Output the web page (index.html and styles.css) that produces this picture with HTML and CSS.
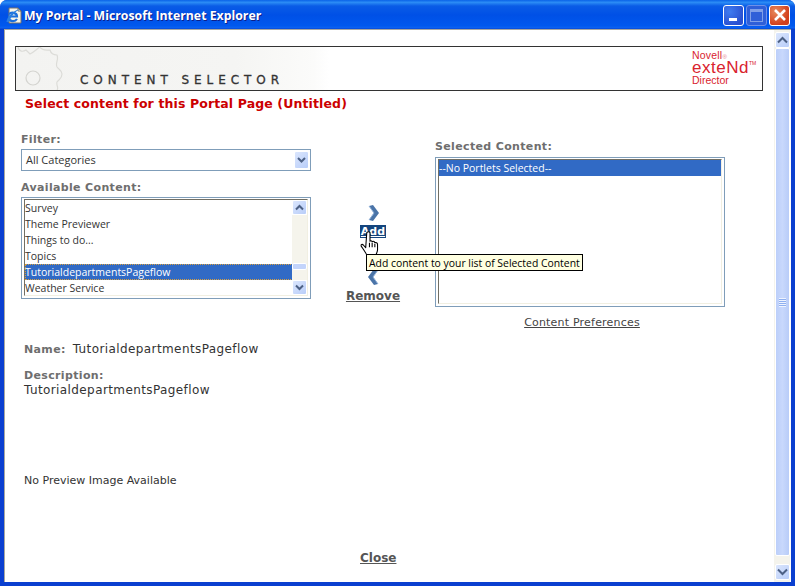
FILE: index.html
```html
<!DOCTYPE html>
<html lang="en">
<head>
<meta charset="utf-8">
<title>My Portal - Microsoft Internet Explorer</title>
<link rel="stylesheet" href="styles.css">
</head>
<body>
<div class="window">
  <div class="titlebar">
    <svg class="ie-icon" width="18" height="18" viewBox="0 0 18 18">
      <path d="M4 1h9l3 3v12H4z" fill="#f7f5ea" stroke="#77736a"/>
      <path d="M13 1v3h3" fill="none" stroke="#77736a"/>
      <path d="M3 9.500h9c0-4-6-5-8-2M12 12c-2 3-7 3-8.500-1" fill="none" stroke="#1c6fdc" stroke-width="2.200"/>
      <path d="M1.500 15C2 10 8 3.500 15 2c-4 2-9 7-11 13z" fill="#2a7ee0"/>
    </svg>
    <span class="title-text">My Portal - Microsoft Internet Explorer</span>
    <div class="win-buttons">
      <div class="win-btn btn-min"><span class="min-glyph"></span></div>
      <div class="win-btn btn-max"><span class="max-glyph"></span></div>
      <div class="win-btn btn-close">
        <svg width="14" height="14" viewBox="0 0 14 14"><path d="M2 2l10 10M12 2L2 12" stroke="#fff" stroke-width="2.600"/></svg>
      </div>
    </div>
  </div>
  <div class="client">
    <div class="page">
      <header class="banner">
        <div class="banner-art">
          <svg class="gear" width="70" height="43" viewBox="0 0 70 43">
            <path d="M2 0c1 5 5 5 8 3l4 4c4-2 8-6 10-7M24 0c2 4 6 3 10 3 1 4 4 5 7 5 2 5-2 8 0 12 2 3 5 3 5 7 0 5-3 5-5 8-1 3 2 6 0 8" fill="none" stroke="#dcdcd8" stroke-width="1.200"/>
            <circle cx="17" cy="31" r="7" fill="none" stroke="#d4d4d0" stroke-width="1.200"/>
          </svg>
          <span class="banner-title">CONTENT SELECTOR</span>
        </div>
        <div class="logo">
          <span class="logo-top">Novell<sup class="logo-mark">®</sup></span>
          <span class="logo-main">exteNd<sup class="logo-tm">TM</sup></span>
          <span class="logo-bottom">Director</span>
        </div>
      </header>
      <h1 class="heading">Select content for this Portal Page (Untitled)</h1>

      <div class="selector">
        <div class="col-left">
          <label class="field-label">Filter:</label>
          <div class="dropdown">
            <span class="dropdown-value">All Categories</span>
            <div class="sb-btn dropdown-btn"><svg width="9" height="7" viewBox="0 0 9 7"><path d="M1 1l3.500 3.500L8 1" class="chev"/></svg></div>
          </div>
          <label class="field-label label-available">Available Content:</label>
          <div class="listbox list-available">
            <ul class="items">
              <li>Survey</li>
              <li>Theme Previewer</li>
              <li>Things to do...</li>
              <li>Topics</li>
              <li class="selected focused">TutorialdepartmentsPageflow</li>
              <li>Weather Service</li>
            </ul>
            <div class="mini-scroll">
              <div class="sb-btn"><svg width="9" height="7" viewBox="0 0 9 7"><path d="M1 5.500L4.500 2 8 5.500" class="chev"/></svg></div>
              <div class="mini-track"><div class="mini-thumb"></div></div>
              <div class="sb-btn"><svg width="9" height="7" viewBox="0 0 9 7"><path d="M1 1.500L4.500 5 8 1.500" class="chev"/></svg></div>
            </div>
          </div>
        </div>

        <div class="col-mid">
          <svg class="arrow" width="13" height="16" viewBox="0 0 13 16"><path d="M2 1l4-1 6 8-6 8-4-1 5-7z" fill="#4a74a8"/><path d="M2 1l5 7-5 7" fill="none" stroke="#8fb0d8"/></svg>
          <a class="action action-add">Add</a>
          <svg class="arrow arrow-back" width="13" height="16" viewBox="0 0 13 16"><path d="M11 1L7 0 1 8l6 8 4-1-5-7z" fill="#4a74a8"/><path d="M11 1L6 8l5 7" fill="none" stroke="#8fb0d8"/></svg>
          <a class="action action-remove">Remove</a>
        </div>

        <div class="col-right">
          <label class="field-label">Selected Content:</label>
          <div class="listbox list-selected">
            <ul class="items">
              <li class="selected">--No Portlets Selected--</li>
            </ul>
          </div>
          <a class="prefs-link">Content Preferences</a>
        </div>
      </div>

      <section class="details">
        <p class="detail-name"><b class="detail-label">Name:</b><span class="detail-value name-value">TutorialdepartmentsPageflow</span></p>
        <p class="detail-desc"><b class="detail-label">Description:</b><br><span class="detail-value">TutorialdepartmentsPageflow</span></p>
        <p class="detail-preview">No Preview Image Available</p>
      </section>
      <a class="action action-close">Close</a>

      <svg class="hand" width="20" height="28" viewBox="0 0 18 26">
        <path d="M6 1.500c1-1 2.500-1 3 0v8c1-1 2 0 2 .5 1-1 2.500 0 2.500 1 1-.5 2.500 0 2.500 1.500v5c0 2-1 3-1.500 5H6c-.5-2-2-3.500-3.500-6L.8 14c-.5-1.500 1-2 2-1l2.200 2.500z" fill="#fff" stroke="#000" stroke-width="1" stroke-linejoin="round"/>
        <path d="M8.500 11v4M11 11v4M13.500 12v3" stroke="#000"/>
      </svg>
      <div class="tooltip">Add content to your list of Selected Content</div>
    </div>
    <div class="vscroll">
      <div class="sb-btn page-btn"><svg width="11" height="8" viewBox="0 0 11 8"><path d="M1 6.500L5.500 2 10 6.500" class="chev"/></svg></div>
      <div class="v-track">
        <div class="v-thumb"><span class="v-grip"></span></div>
      </div>
      <div class="sb-btn page-btn"><svg width="11" height="8" viewBox="0 0 11 8"><path d="M1 1.500L5.500 6 10 1.500" class="chev"/></svg></div>
    </div>
  </div>
</div>
</body>
</html>
```

FILE: styles.css
```css
* { box-sizing: border-box; }
html, body { margin: 0; padding: 0; }
body { width: 795px; height: 586px; overflow: hidden; font-family: "DejaVu Sans", sans-serif; }

.window {
  width: 795px;
  height: 586px;
  display: flex;
  flex-direction: column;
  padding: 0 4px 4px;
  background: #0a3fd0;
  border-radius: 7px 7px 0 0;
}

.titlebar {
  height: 30px;
  margin: 0 -4px;
  padding: 2px 5px 0 5px;
  display: flex;
  align-items: center;
  flex: none;
  border-radius: 7px 7px 0 0;
  background: linear-gradient(to bottom, #0a63e8 0, #2b8cf5 8%, #0a5ce6 20%, #0050e6 50%, #0058ee 85%, #0a60f0 92%, #0338c8 100%);
}
.ie-icon { flex: none; margin-right: 1px; }
.title-text {
  font: bold 12.300px/16px "Open Sans", sans-serif;
  color: #fff;
  text-shadow: 1px 1px 0 #0f1f88;
}
.win-buttons { margin-left: auto; display: flex; gap: 2px; margin-top: -2px; }
.win-btn {
  width: 21px;
  height: 21px;
  border: 1px solid #fff;
  border-radius: 3px;
  display: flex;
  align-items: center;
  justify-content: center;
}
.btn-min { background: radial-gradient(circle at 30% 30%, #3f7cf0, #2a50d0 75%); }
.min-glyph { width: 8px; height: 3px; background: #fff; margin: 8px 0 0 -2px; }
.btn-max { background: #2f5fd8; border-color: #6f90e8; }
.max-glyph { width: 13px; height: 13px; border: 1px solid #7f9fe8; border-top-width: 3px; }
.btn-close { background: radial-gradient(circle at 30% 30%, #e88a5c, #d2401c 70%); }

.client {
  flex: 1;
  min-height: 0;
  display: flex;
  background: #fff;
  border-top: 1px solid #a8a8a0;
  border-left: 1px solid #a8a8a0;
  margin-top: -1px;
  padding-right: 1px;
}

.page { flex: 1; min-width: 0; position: relative; padding-top: 16px; }

.banner {
  height: 45px;
  width: 748px;
  margin-left: 10px;
  border: 1px solid #333;
  display: flex;
  justify-content: space-between;
  background: #fff;
}
.banner-art {
  width: 313px;
  position: relative;
  background: linear-gradient(to right, #f3f3f1 0, #f5f5f3 70%, #fbfbfa 95%, #fff 100%);
  padding: 24px 0 0 64px;
}
.gear { position: absolute; left: 0; top: 0; }
.banner-title {
  position: relative;
  display: block;
  font: 12px/18px "DejaVu Sans", sans-serif;
  color: #333;
  letter-spacing: 4.950px;
  -webkit-text-stroke: .3px #333;
  white-space: nowrap;
}

.logo {
  width: 70px;
  display: flex;
  flex-direction: column;
  font-family: "Liberation Sans", sans-serif;
  color: #d9232e;
  padding-top: 3px;
}
.logo-top, .logo-bottom { font-size: 10.500px; line-height: 11px; }
.logo-top { letter-spacing: .2px; }
.logo-mark { font-size: 6px; line-height: 0; vertical-align: baseline; color: #e58088; }
.logo-main { font-size: 17px; line-height: 14px; letter-spacing: .5px; }
.logo-tm { font-size: 5px; line-height: 0; vertical-align: 8px; letter-spacing: 0; }

.heading {
  margin: 5px 0 0 20px;
  font: bold 12.500px/16px "DejaVu Sans", sans-serif;
  letter-spacing: .12px;
  color: #cc0000;
  white-space: nowrap;
}

.selector {
  display: flex;
  padding-left: 16px;
  margin-top: 21px;
}
.col-left { width: 290px; flex: none; }
.col-mid {
  width: 124px;
  flex: none;
  display: flex;
  flex-direction: column;
  align-items: center;
  padding-top: 72px;
}
.col-right { width: 290px; flex: none; padding-top: 7px; }

.field-label {
  display: block;
  font: bold 11px/14px "DejaVu Sans", sans-serif;
  color: #6e6e6e;
  letter-spacing: .35px;
}
.label-available { margin-top: 10px; }

.dropdown {
  height: 22px;
  margin-top: 2px;
  border: 1px solid #7f9db9;
  display: flex;
  align-items: center;
  justify-content: space-between;
  padding: 0 1px 0 4px;
  background: #fff;
}
.dropdown-value { font: 11px/14px "Open Sans", sans-serif; color: #333; }
.dropdown-btn { width: 15px; height: 18px; }

.sb-btn {
  flex: none;
  display: flex;
  align-items: center;
  justify-content: center;
  background: linear-gradient(135deg, #dbe6fd, #b8cdf9);
  border: 1px solid #fff;
  border-radius: 2px;
}
.chev { fill: none; stroke: #4d6185; stroke-width: 2; }

.listbox {
  border: 1px solid #7f9db9;
  padding: 1px 2px 2px;
  background: #fff;
  display: flex;
  box-shadow: inset 0 0 0 1px #fff;
}
.list-available { height: 102px; margin-top: 2px; }
.list-selected { height: 150px; margin-top: 3px; }
.items {
  list-style: none;
  margin: 0;
  padding: 0;
  flex: 1;
  min-width: 0;
  border-top: 1px solid #716f64;
  border-left: 1px solid #716f64;
  border-right: 1px solid #f1efe2;
  border-bottom: 1px solid #f1efe2;
}
.items li {
  height: 16px;
  font: 10.500px/16px "Open Sans", sans-serif;
  color: #333;
  white-space: nowrap;
}
.items li.selected { background: #316ac5; color: #fff; }
.items li.focused { outline: 1px dotted #d9a040; outline-offset: -1px; }

.mini-scroll {
  width: 15px;
  flex: none;
  display: flex;
  flex-direction: column;
  margin-left: -16px;
  margin-right: 1px;
  padding: 1px 0;
  position: relative;
}
.mini-scroll .sb-btn { height: 15px; }
.mini-track {
  flex: 1;
  background: #f5f4ec;
  padding-top: 48px;
}
.mini-thumb { height: 7px; background: #c3d4fb; border: 1px solid #fff; border-radius: 2px; }

.arrow { display: block; flex: none; }
.arrow-back { margin-top: 31px; }
.action {
  font: bold 12px/14px "DejaVu Sans", sans-serif;
  color: #555;
  text-decoration: underline;
  white-space: nowrap;
}
.action-add {
  margin-top: 4px;
  padding: 0 1px;
  font-size: 11px;
  line-height: 13px;
  background: #14457d;
  color: #fff;
}
.action-remove { margin-top: 4px; }
.action-close {
  display: block;
  width: max-content;
  margin: 63px 0 0 355px;
}
.prefs-link {
  display: block;
  margin-top: 9px;
  padding-left: 4px;
  text-align: center;
  font: 11px/14px "DejaVu Sans", sans-serif;
  letter-spacing: .2px;
  color: #444;
  text-decoration: underline;
}

.details { padding-left: 19px; }
.details p { margin: 0; font: 12px/14px "DejaVu Sans", sans-serif; color: #333; white-space: nowrap; }
.detail-label { font-size: 11px; color: #6e6e6e; letter-spacing: .35px; }
.detail-name { padding-top: 12px; }
.detail-desc { padding-top: 11px; }
.details p.detail-preview { padding-top: 77px; font-size: 11px; }
.detail-value { color: #333; letter-spacing: .4px; }
.name-value { margin-left: 7px; }

.tooltip {
  position: absolute;
  left: 361px;
  top: 224px;
  width: 217px;
  height: 17px;
  border: 1px solid #000;
  background: #ffffe1;
  color: #000;
  font: 10.400px/16px "Open Sans", sans-serif;
  padding-left: 2px;
  white-space: nowrap;
}
.hand { position: absolute; left: 355px; top: 201px; }

.vscroll {
  width: 16px;
  flex: none;
  display: flex;
  flex-direction: column;
  background: #f4f3ec;
  padding: 2px 0 2px 1px;
}
.page-btn { height: 16px; }
.v-track { flex: 1; display: flex; padding: 0 0 8px; }
.v-thumb {
  flex: 1;
  background: linear-gradient(to right, #bccffa, #c8d8fc 50%, #b8ccf8);
  border: 1px solid #fff;
  border-radius: 2px;
  display: flex;
  justify-content: center;
  padding-top: 249px;
}
.v-grip {
  width: 7px;
  height: 9px;
  background: repeating-linear-gradient(to bottom, #eef3ff 0 1px, #8fb0f0 1px 2px);
}
```
